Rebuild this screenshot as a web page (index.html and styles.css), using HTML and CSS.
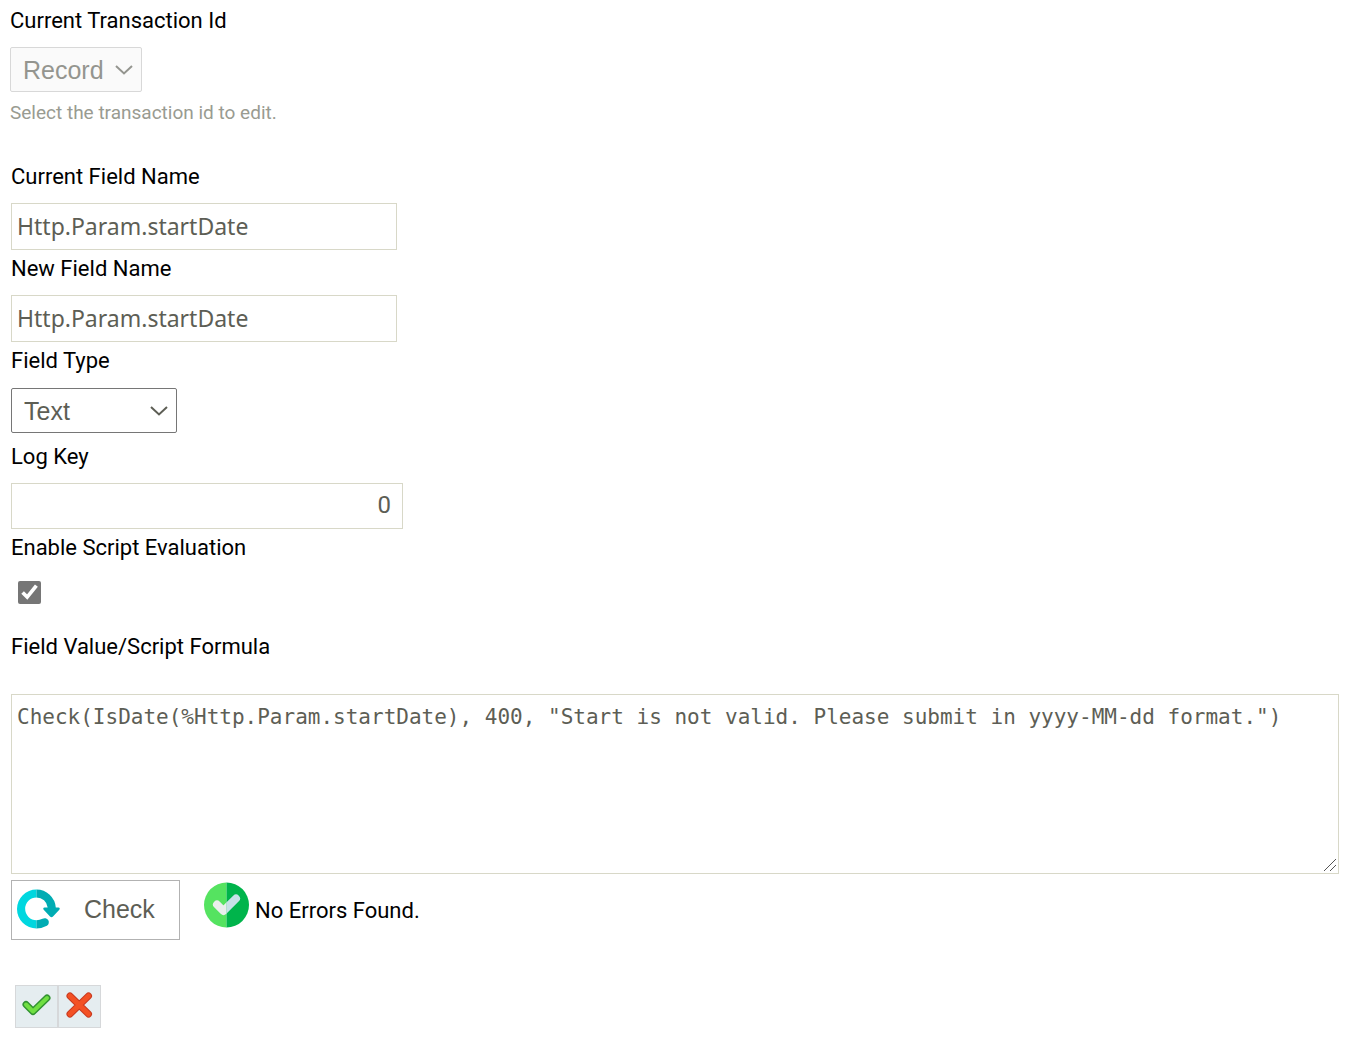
FILE: index.html
```html
<!DOCTYPE html>
<html lang="en">
<head>
<meta charset="utf-8">
<meta name="viewport" content="width=device-width, initial-scale=1">
<title>Edit Field</title>
<link rel="stylesheet" href="styles.css">
</head>
<body>
<form class="editor">
  <div class="field field-transaction">
    <label for="transaction">Current Transaction Id</label>
    <div class="select select-small">
      <select id="transaction" disabled><option>Record</option></select>
      <svg class="chevron" viewBox="0 0 18 10" aria-hidden="true"><path d="M1 1l8 7.500 8-7.500"/></svg>
    </div>
    <p class="hint">Select the transaction id to edit.</p>
  </div>

  <div class="fields">
    <div class="field">
      <label for="current-name">Current Field Name</label>
      <input class="text" id="current-name" type="text" value="Http.Param.startDate">
    </div>
    <div class="field">
      <label for="new-name">New Field Name</label>
      <input class="text" id="new-name" type="text" value="Http.Param.startDate">
    </div>
    <div class="field field-type">
      <label for="type">Field Type</label>
      <div class="select">
        <select id="type"><option>Text</option><option>Number</option><option>Date</option></select>
        <svg class="chevron" viewBox="0 0 18 10" aria-hidden="true"><path d="M1 1l8 7.500 8-7.500"/></svg>
      </div>
    </div>
    <div class="field">
      <label for="log-key">Log Key</label>
      <input class="text number" id="log-key" type="text" inputmode="numeric" value="0">
    </div>
    <div class="field">
      <label for="enable-script">Enable Script Evaluation</label>
      <input class="tick" id="enable-script" type="checkbox" checked>
    </div>
    <div class="field field-formula">
      <label for="formula">Field Value/Script Formula</label>
      <textarea id="formula" spellcheck="false">Check(IsDate(%Http.Param.startDate), 400, "Start is not valid. Please submit in yyyy-MM-dd format.")</textarea>
    </div>
  </div>

  <div class="check-row">
    <button class="check" type="button">
      <svg width="44" height="40" viewBox="0 0 44 40" aria-hidden="true">
        <path d="M19.500 0.500v8a11.300 11.300 0 0 0 0 22.700v8.300a19.500 19.500 0 0 1 0-39z" fill="#00d7df"/>
        <path d="M19.500 0.500a19.500 19.500 0 0 1 19.300 18h2.700q2 .5 .8 2.300l-6.300 6.700q-1.500 1.300-3 0l-6.300-6.700q-1.200-1.800 .8-2.300h3.200a11.300 11.300 0 0 0-11.200-10z" fill="#00acb3"/>
        <path d="M19.500 31.200q3.200 0 6-1.400a4 4 0 0 1 4.400 7q-4.900 2.700-10.400 2.700z" fill="#00acb3"/>
      </svg>
      <span>Check</span>
    </button>
    <div class="status" role="status">
      <svg width="46" height="46" viewBox="0 0 46 46" aria-hidden="true">
        <clipPath id="left-half"><path d="M0 0h22.500v46H0z"/></clipPath>
        <clipPath id="right-half"><path d="M22.500 0H46v46H22.500z"/></clipPath>
        <path d="M22.500 .5a22.500 22.500 0 0 0 0 45z" fill="#55e360"/>
        <path d="M22.500 .5a22.500 22.500 0 0 1 0 45z" fill="#00b44b"/>
        <g fill="none" stroke-width="8" stroke-linecap="round" stroke-linejoin="round">
          <path d="M13 22.500l6.500 6.500L32 16.500" stroke="#e9efed" clip-path="url(#left-half)"/>
          <path d="M13 22.500l6.500 6.500L32 16.500" stroke="#c7e1e7" clip-path="url(#right-half)"/>
        </g>
      </svg>
      <span>No Errors Found.</span>
    </div>
  </div>

  <div class="actions">
    <button type="submit" aria-label="Save">
      <svg width="30" height="26" viewBox="0 0 30 26" aria-hidden="true"><path d="M4 12.500l7 7L25 6" fill="none" stroke="#329332" stroke-width="7" stroke-linecap="round" stroke-linejoin="round"/><path d="M4 12.500l7 7L25 6" fill="none" stroke="#70df42" stroke-width="4" stroke-linecap="round" stroke-linejoin="round"/></svg>
    </button>
    <button type="button" aria-label="Cancel">
      <svg width="30" height="26" viewBox="0 0 30 26" aria-hidden="true"><path d="M5 4l18.500 18M23.500 4L5 22" fill="none" stroke="#c83a20" stroke-width="7" stroke-linecap="round"/><path d="M5 4l18.500 18M23.500 4L5 22" fill="none" stroke="#f35124" stroke-width="5" stroke-linecap="round"/></svg>
    </button>
  </div>
</form>
</body>
</html>
```
FILE: styles.css
```css
* { box-sizing: border-box; }

body {
  margin: 0;
  background: #fff;
  color: #000;
  font: 22px/27px Roboto, sans-serif;
}

.editor { padding: 7px 26px 30px 10px; }

.fields {
  display: flex;
  flex-direction: column;
  gap: 5px;
  padding-left: 1px;
}

.field {
  display: flex;
  flex-direction: column;
  align-items: flex-start;
  gap: 13px;
}

.field-transaction { margin-bottom: 37px; }

.field-type {
  gap: 14px;
  margin-bottom: 5px;
}

.hint {
  margin: -6px 0 0;
  color: #999b91;
  font-size: 19px;
}

.text {
  width: 386px;
  max-width: 100%;
  height: 47px;
  padding: 0 5px 2px;
  border: 1px solid #d8d8c8;
  color: #5d5e55;
  font: 23px "Noto Sans", sans-serif;
}

.number {
  width: 392px;
  height: 46px;
  padding-right: 11px;
  font: 24px Roboto, sans-serif;
  text-align: right;
}

.select {
  display: grid;
  align-items: center;
  width: 166px;
}

.select-small { width: 132px; }

.select select,
.chevron { grid-area: 1 / 1; }

.select select {
  appearance: none;
  width: 100%;
  height: 45px;
  padding: 0 12px;
  border: 1px solid #767676;
  border-radius: 2px;
  background: #fff;
  color: #5d5e55;
  font: 25px "Liberation Sans", sans-serif;
}

.select select:disabled {
  border-color: #d8d8d8;
  background: #fafafa;
  color: #94958f;
  opacity: 1;
}

.chevron {
  justify-self: end;
  width: 18px;
  height: 10px;
  margin-right: 9px;
  fill: none;
  stroke: #5d5e55;
  stroke-width: 2;
  pointer-events: none;
}

.select-small .chevron { stroke: #94958f; }

.tick {
  width: 23px;
  height: 23px;
  margin: 7px;
  accent-color: #767676;
}

.field-formula {
  gap: 34px;
  margin-top: 17px;
}

textarea {
  width: 100%;
  height: 180px;
  padding: 9px 5px;
  border: 1px solid #d8d8c8;
  color: #5d5e55;
  font: 21px/26px "DejaVu Sans Mono", monospace;
  resize: both;
}

textarea::-webkit-resizer {
  background: url("data:image/svg+xml,%3Csvg xmlns='http://www.w3.org/2000/svg' viewBox='0 0 15 15'%3E%3Cpath d='M1 13L13 1M7 13l6-6' stroke='%23555' fill='none'/%3E%3C/svg%3E") no-repeat right bottom / 15px 15px;
}

.check-row {
  display: flex;
  align-items: flex-start;
  gap: 24px;
  margin-top: 6px;
  padding-left: 1px;
}

button { cursor: pointer; }

.check {
  display: flex;
  align-items: center;
  gap: 23px;
  width: 169px;
  height: 60px;
  padding: 0 5px 2px;
  border: 1px solid #b2b2b2;
  background: #fff;
  color: #5d5e55;
  font: 25px "Liberation Sans", sans-serif;
}

.status {
  display: flex;
  align-items: center;
  gap: 5px;
  padding-top: 2px;
}

.status span { padding-top: 11px; }

.actions {
  display: flex;
  margin-top: 45px;
  padding-left: 5px;
}

.actions button {
  display: grid;
  place-items: center;
  width: 43px;
  height: 43px;
  padding: 0 0 3px;
  border: 1px solid #d6d8da;
  background: #e5edf0;
}
```
